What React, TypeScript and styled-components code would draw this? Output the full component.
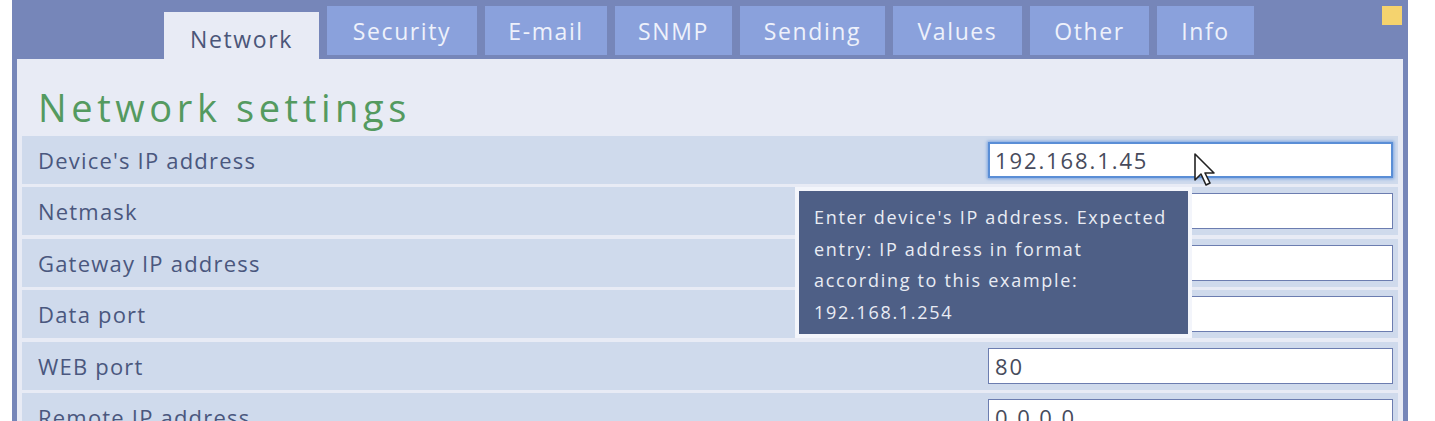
import React from 'react';
import styled, { createGlobalStyle } from 'styled-components';

const GlobalStyle = createGlobalStyle`
  body {
    margin: 0;
    background: #ffffff;
    font-family: "Open Sans", "DejaVu Sans", sans-serif;
  }
`;

const Frame = styled.div`
  position: relative;
  margin-left: 12px;
  width: 1396px;
  height: 421px;
  overflow: hidden;
  background: #7686b9;
  padding: 0 5px;
  box-sizing: border-box;
  display: flex;
  flex-direction: column;
`;

const TabBar = styled.div`
  display: flex;
  align-items: flex-end;
  gap: 8px;
  height: 59px;
  padding-left: 147px;
  flex-shrink: 0;
`;

const Tab = styled.div<{ $w: number; $active?: boolean }>`
  width: ${(p) => p.$w}px;
  height: ${(p) => (p.$active ? 47 : 49)}px;
  margin-bottom: ${(p) => (p.$active ? 0 : 4)}px;
  background: ${(p) => (p.$active ? '#e8ebf5' : '#8aa1dc')};
  color: ${(p) => (p.$active ? '#4b5679' : '#eef1fb')};
  display: flex;
  align-items: center;
  justify-content: center;
  padding-top: ${(p) => (p.$active ? 6 : 0)}px;
  box-sizing: border-box;
  font-size: 23px;
  letter-spacing: 1.6px;
  white-space: nowrap;
`;

const Marker = styled.div`
  align-self: flex-start;
  margin: 6px 1px 0 auto;
  width: 20px;
  height: 19px;
  background: #f5d36e;
`;

const Panel = styled.div`
  flex: 1;
  background: #e8ebf5;
  padding: 0 5px;
`;

const Title = styled.h1`
  margin: 0;
  height: 77px;
  padding: 26px 0 0 16px;
  box-sizing: border-box;
  font-size: 38px;
  font-weight: 500;
  letter-spacing: 4.6px;
  color: #549a60;
  line-height: 44px;
`;

const Row = styled.div`
  height: 48px;
  margin-bottom: 3.4px;
  background: #cfdaec;
  display: flex;
  align-items: center;
  justify-content: space-between;
  padding: 0 5px 0 16px;
`;

const Label = styled.span`
  font-size: 22px;
  letter-spacing: 1.2px;
  color: #4a577e;
  white-space: nowrap;
`;

const Field = styled.div<{ $focus?: boolean }>`
  width: 405px;
  height: 36px;
  box-sizing: border-box;
  background: #ffffff;
  border: ${(p) => (p.$focus ? '2px solid #5a8ed6' : '1px solid #6c7db0')};
  box-shadow: ${(p) => (p.$focus ? '0 0 3px 1px #7ea6e0' : 'none')};
  display: flex;
  align-items: center;
  padding-left: ${(p) => (p.$focus ? 5 : 6)}px;
  font-size: 22px;
  letter-spacing: 1.9px;
  color: #474b5c;
`;

const Tooltip = styled.div`
  position: absolute;
  left: 783px;
  top: 187px;
  width: 397px;
  height: 151px;
  box-sizing: border-box;
  border: 4px solid #f3f5fb;
  background: #4e5f86;
  padding: 11px 0 0 15px;
  color: #e9ecf4;
  font-size: 18px;
  line-height: 31.5px;
  letter-spacing: 1.7px;
  white-space: nowrap;
`;

const Pointer = styled.svg`
  position: absolute;
  left: 1181px;
  top: 152px;
`;

const tabs = [
  { name: 'Network', w: 155, active: true },
  { name: 'Security', w: 150 },
  { name: 'E-mail', w: 122 },
  { name: 'SNMP', w: 117 },
  { name: 'Sending', w: 145 },
  { name: 'Values', w: 129 },
  { name: 'Other', w: 119 },
  { name: 'Info', w: 97 },
];

const rows = [
  { label: "Device's IP address", value: '192.168.1.45', focus: true },
  { label: 'Netmask', value: '' },
  { label: 'Gateway IP address', value: '' },
  { label: 'Data port', value: '' },
  { label: 'WEB port', value: '80' },
  { label: 'Remote IP address', value: '0.0.0.0' },
];

export default function App(): JSX.Element {
  return (
    <>
      <GlobalStyle />
      <Frame>
        <TabBar>
          {tabs.map((t) => (
            <Tab key={t.name} $w={t.w} $active={t.active}>
              {t.name}
            </Tab>
          ))}
          <Marker />
        </TabBar>
        <Panel>
          <Title>Network settings</Title>
          {rows.map((r) => (
            <Row key={r.label}>
              <Label>{r.label}</Label>
              <Field $focus={r.focus}>{r.value}</Field>
            </Row>
          ))}
        </Panel>

        <Tooltip>
          Enter device&apos;s IP address. Expected
          <br />
          entry: IP address in format
          <br />
          according to this example:
          <br />
          192.168.1.254
        </Tooltip>

        <Pointer width="26" height="36" viewBox="0 0 26 36">
          <path
            d="M2 2 L2 28 L8 22 L13 33 L17 31 L12 21 L21 21 Z"
            fill="#ffffff"
            stroke="#222222"
            strokeWidth="1.6"
            strokeLinejoin="round"
          />
        </Pointer>
      </Frame>
    </>
  );
}
